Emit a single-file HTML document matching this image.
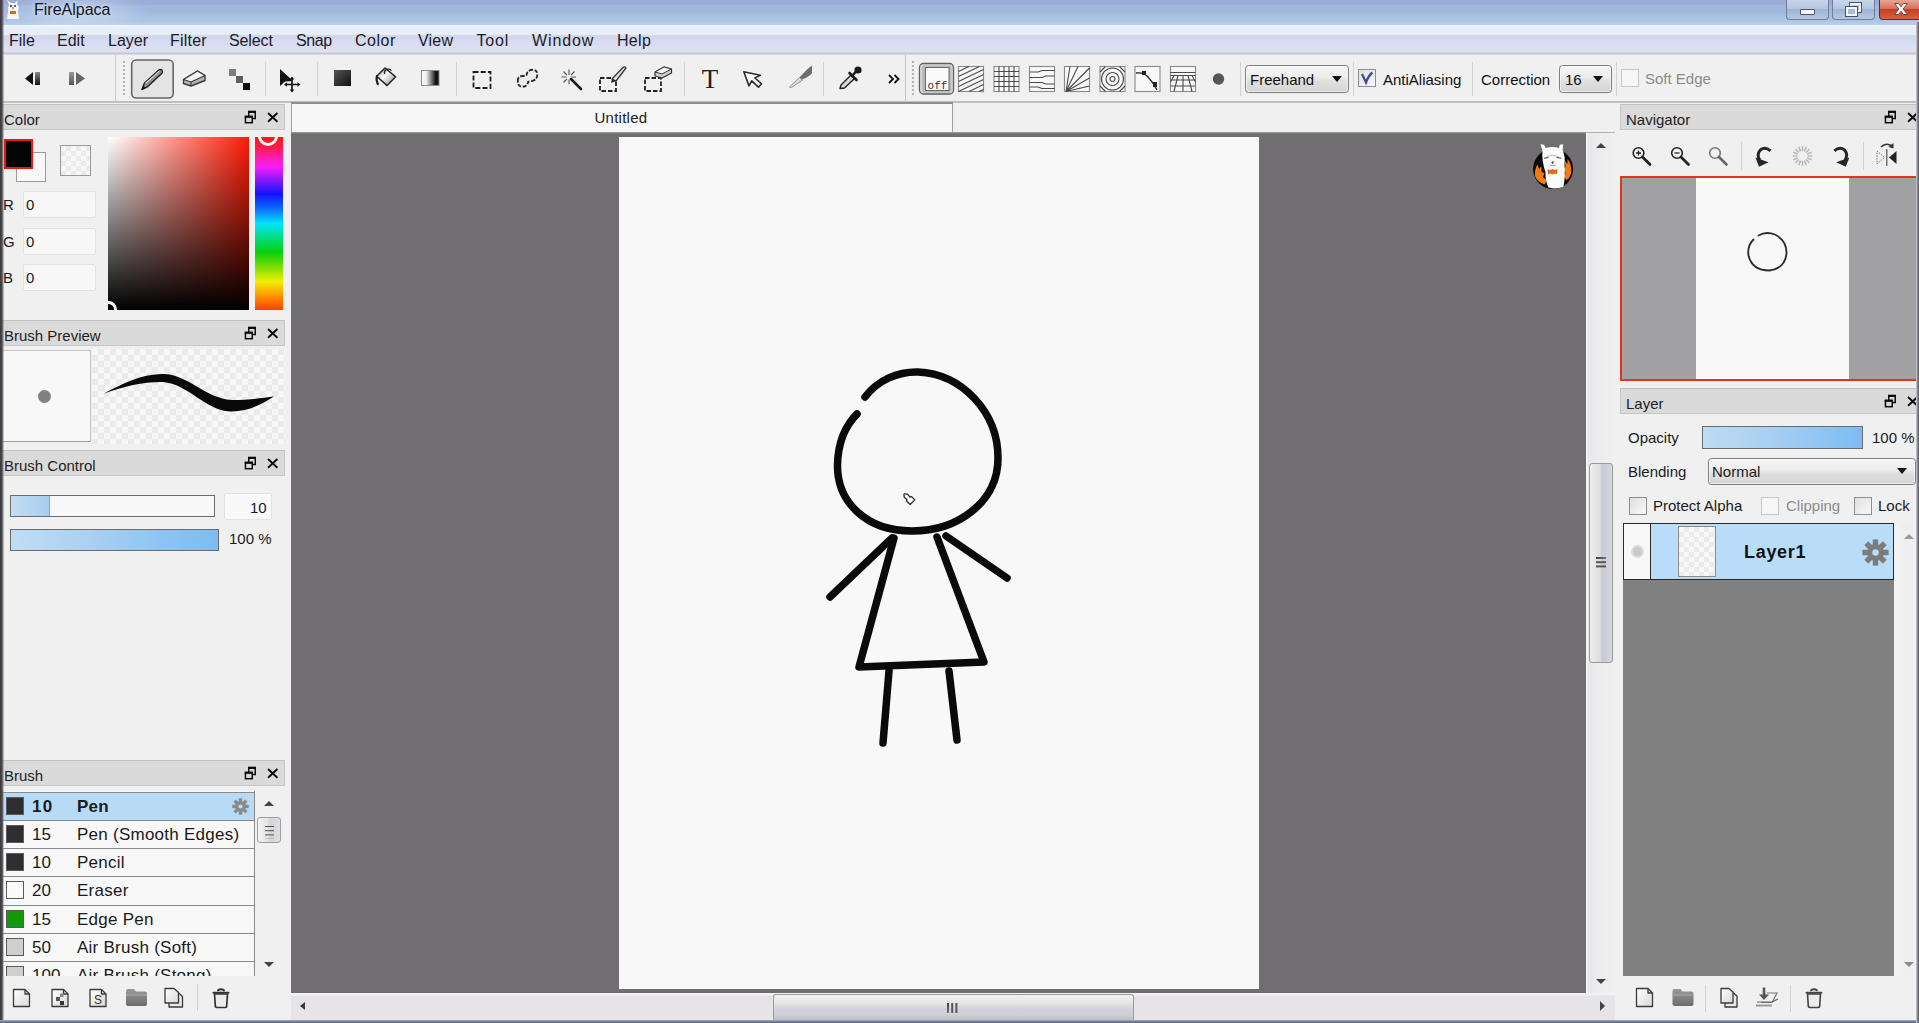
<!DOCTYPE html>
<html>
<head>
<meta charset="utf-8">
<title>FireAlpaca</title>
<style>
*{box-sizing:border-box;margin:0;padding:0}
html,body{width:1919px;height:1023px;overflow:hidden}
body{position:relative;background:#f0f0f0;font-family:"Liberation Sans",sans-serif;font-size:15px;color:#1a1a1a}
.a{position:absolute}
.t{position:absolute;white-space:nowrap;line-height:20px;font-size:15px}
#titlebar{left:0;top:0;width:1919px;height:25px;background:linear-gradient(180deg,#9badd6 0px,#9badd6 4px,#9fb8e0 6px,#9fb8e0 11px,#a4bddf 13px,#aec6e6 21px,#b9d0ee 25px)}
#menubar{left:0;top:25px;width:1919px;height:30px;background:linear-gradient(180deg,#f6f5fb 0px,#f3f3fa 1px,#e8eef8 2.5px,#e8eef8 9.5px,#d3d7ea 10.5px,#d4d8ec 14px,#d6daf4 16px,#dcdff2 22px,#dfe1f2 27px,#c4c6d6 28px,#c6c8d8 29px,#e8e8ee 30px)}
#toolbar{left:0;top:55px;width:1919px;height:48px;background:#f0f0f0;border-bottom:2px solid #bfbfbf}
.menu{top:31px;font-size:16px;color:#1c1c24}
.phead{height:26px;background:#dadada;border:1px solid #c6c6c6;border-top-color:#c2c2c2}
.phead .t{left:3px;top:5px;font-size:15px;color:#1e1e1e}
.sep{position:absolute;width:1px;background:#cdcdcd}
.checker{background-color:#f7f7f7;background-image:linear-gradient(45deg,#eaeaea 25%,transparent 25%,transparent 75%,#eaeaea 75%),linear-gradient(45deg,#eaeaea 25%,transparent 25%,transparent 75%,#eaeaea 75%);background-size:12px 12px;background-position:0 0,6px 6px}
.inp{background:#f7f7f7;border:1px solid #e3e3e3;border-radius:2px}
.cb{position:absolute;width:18px;height:18px;background:linear-gradient(135deg,#dedede,#fafafa);border:1px solid #8e8f8f}
.cb.dis{border-color:#c8c8c8;background:#f6f6f6}
.sel{position:absolute;border:1px solid #7e7e7e;border-radius:3.500px;background:linear-gradient(180deg,#f6f6f6 0%,#ededed 42%,#dfdfdf 58%,#d6d6d6 100%);box-shadow:inset 0 0 0 1px rgba(255,255,255,.55)}
.arrow{position:absolute;width:0;height:0;border-left:5px solid transparent;border-right:5px solid transparent;border-top:6px solid #111}
.sw2{position:absolute;left:3px;top:4px;width:18px;height:18px;border:1px solid #5a5a5a}
.n2{position:absolute;left:29px;top:4px;font-size:17px;line-height:20px}
.nm2{position:absolute;left:74px;top:4px;font-size:17px;line-height:20px;white-space:nowrap;letter-spacing:.25px}
</style>
</head>
<body>
<div id="titlebar" class="a"></div>
<div id="menubar" class="a"></div>
<div id="toolbar" class="a"></div>
<svg class="a" style="left:3px;top:0" width="22" height="20" viewBox="0 0 22 20">
<path d="M4 0 L6 5 Q4 8 5 12 L4 19 L16 19 L15 11 Q17 7 14 4 L15 0 L12 3 L8 3 Z" fill="#f7f5f0"/>
<rect x="7" y="11" width="6" height="3" fill="#d0622a"/>
<circle cx="8" cy="6" r="1" fill="#333"/><circle cx="12" cy="6" r="1" fill="#333"/>
<path d="M9 8 L11 8" stroke="#555" stroke-width="1"/>
</svg>
<div class="a" style="left:8px;top:-8px;width:140px;height:38px;background:radial-gradient(ellipse at center,rgba(255,255,255,.30) 0%,rgba(255,255,255,.18) 40%,rgba(255,255,255,0) 72%)"></div>
<div class="t" style="left:34px;top:0px;font-size:16px;line-height:20px;color:#16161e;text-shadow:0 0 5px rgba(255,255,255,.6)">FireAlpaca</div>
<div class="a" style="left:1786px;top:0;width:43px;height:20px;border:1px solid #6f7f9a;border-top:none;border-radius:0 0 4px 4px;background:linear-gradient(180deg,#c8d6ea 0%,#b4c6e0 45%,#9fb4d4 50%,#b6c8e2 100%)"></div>
<div class="a" style="left:1800px;top:8.500px;width:15px;height:6.500px;border:1px solid #4b5568;background:#f6f6f6;border-radius:1px"></div>
<div class="a" style="left:1832px;top:0;width:43px;height:20px;border:1px solid #6f7f9a;border-top:none;border-radius:0 0 4px 4px;background:linear-gradient(180deg,#c8d6ea 0%,#b4c6e0 45%,#9fb4d4 50%,#b6c8e2 100%)"></div>
<div class="a" style="left:1850px;top:3px;width:11px;height:9px;border:2px solid #f4f4f4;outline:1px solid #4b5568"></div>
<div class="a" style="left:1846px;top:7px;width:11px;height:9px;border:2px solid #f4f4f4;outline:1px solid #4b5568;background:#a9bcd8"></div>
<div class="a" style="left:1879px;top:0;width:41px;height:20px;border:1px solid #6a2a22;border-top:none;border-radius:0 0 0 4px;background:linear-gradient(180deg,#e8a594 0%,#d8705a 45%,#c43f24 50%,#d9623e 100%)"></div>
<svg class="a" style="left:1893px;top:3px" width="18" height="14" viewBox="0 0 18 14"><path d="M1.500 .500 L5.500 .500 L8 3.700 L10.500 .500 L14.500 .500 L10.100 6 L14.500 11.500 L10.500 11.500 L8 8.300 L5.500 11.500 L1.500 11.500 L5.900 6 Z" fill="#fbfbfb" stroke="#6a4a48" stroke-width="1" stroke-linejoin="round"/></svg>
<div class="t menu" style="left:9px;letter-spacing:0px">File</div>
<div class="t menu" style="left:57px;letter-spacing:0px">Edit</div>
<div class="t menu" style="left:108px;letter-spacing:0px">Layer</div>
<div class="t menu" style="left:170px;letter-spacing:0.2px">Filter</div>
<div class="t menu" style="left:229px;letter-spacing:-0.1px">Select</div>
<div class="t menu" style="left:296px;letter-spacing:-0.4px">Snap</div>
<div class="t menu" style="left:355px;letter-spacing:0.5px">Color</div>
<div class="t menu" style="left:418px;letter-spacing:0.2px">View</div>
<div class="t menu" style="left:476.5px;letter-spacing:0.8px">Tool</div>
<div class="t menu" style="left:532px;letter-spacing:0.9px">Window</div>
<div class="t menu" style="left:617px;letter-spacing:0.3px">Help</div>
<svg class="a" style="left:0;top:55px" width="1240" height="47" viewBox="0 55 1240 47">
<defs>
<linearGradient id="gv" x1="0" y1="0" x2="0" y2="1"><stop offset="0" stop-color="#888"/><stop offset="1" stop-color="#111"/></linearGradient>
<linearGradient id="gv2" x1="0" y1="0" x2="0" y2="1"><stop offset="0" stop-color="#999"/><stop offset="1" stop-color="#555"/></linearGradient>
<linearGradient id="gsq" x1="0" y1="0" x2="1" y2="1"><stop offset="0" stop-color="#555"/><stop offset="1" stop-color="#111"/></linearGradient>
<linearGradient id="ggr" x1="0" y1="0" x2="1" y2="0"><stop offset="0" stop-color="#fdfdfd"/><stop offset=".28" stop-color="#ededed"/><stop offset=".55" stop-color="#808080"/><stop offset=".8" stop-color="#141414"/><stop offset="1" stop-color="#101010"/></linearGradient>
<linearGradient id="bk" x1="0" y1="0" x2="1" y2="1"><stop offset="0" stop-color="#a8a8a8"/><stop offset=".45" stop-color="#f8f8f8"/><stop offset="1" stop-color="#7e7e7e"/></linearGradient>
</defs>
<!-- prev / next -->
<path d="M25 78.5 L33 72 L33 85 Z" fill="#111"/><rect x="35" y="72" width="5" height="13" fill="url(#gv)"/>
<rect x="69" y="72" width="5" height="13" fill="url(#gv2)"/><path d="M76 72 L85 78.5 L76 85 Z" fill="#666"/>
<!-- selected pencil box -->
<rect x="131.700" y="60" width="41.500" height="38" rx="4.500" fill="#e4e4e4" stroke="#666" stroke-width="1.600"/>
<path d="M142 89.500 L144.300 83.200 L158.800 70 Q160.500 68.800 162 70.300 Q163.300 71.800 162 73.300 L147.500 86.800 Z" fill="#8c8c8c" stroke="#1e1e1e" stroke-width="1.300" stroke-linejoin="round"/>
<path d="M145.500 83.500 L159.500 70.800" stroke="#d8d8d8" stroke-width="1.100"/>
<path d="M142 89.500 L143.300 86 L145 87.800 Z" fill="#111" stroke="#111" stroke-width=".8"/>
<!-- eraser -->
<path d="M183.500 79.500 L197.500 71 L205 75.500 L205 80.500 L191 86 L183.500 83.500 Z" fill="#b4b4b4" stroke="#3c3c3c" stroke-width="1.400" stroke-linejoin="round"/>
<path d="M183.500 79.500 L197.500 71 L205 75.500 L191 82 Z" fill="#f4f4f4" stroke="#3c3c3c" stroke-width="1.200" stroke-linejoin="round"/>
<path d="M191 82 L191 86" stroke="#3c3c3c" stroke-width="1.100"/>
<!-- dot tool -->
<rect x="229" y="69" width="7" height="7" fill="#7d7d7d"/><rect x="236" y="76" width="7" height="7" fill="#5f5f5f"/><rect x="243" y="83" width="7" height="7" fill="#0c0c0c"/>
<!-- move tool -->
<path d="M280 69 L280 86 L285 81.5 L293 81 Z" fill="#111"/>
<path d="M292 78 L292 91 M285.5 84.5 L299 84.5" stroke="#111" stroke-width="1.6"/>
<path d="M292 76.5 L294.3 79.5 L289.7 79.5Z M292 92.5 L294.3 89.5 L289.7 89.5Z M284 84.5 L287 82.2 L287 86.8Z M300.5 84.5 L297.5 82.2 L297.5 86.8Z" fill="#111"/>
<!-- fill rect -->
<rect x="334" y="70" width="17" height="16" fill="url(#gsq)"/>
<!-- bucket -->
<path d="M385 68 L395.700 76.800 L387.100 85.600 L376.700 76.200 Z" fill="url(#bk)" stroke="#262626" stroke-width="1.500" stroke-linejoin="round"/>
<path d="M384.600 74 Q383.800 70.300 387 69.300 Q390.300 68.500 391.300 70.800" fill="none" stroke="#262626" stroke-width="1.400"/>
<path d="M376.800 76.200 Q375.800 80 377.800 84" stroke="#1a1a1a" stroke-width="2.200" fill="none" stroke-linecap="round"/>
<!-- gradient -->
<rect x="421.500" y="70.500" width="17.500" height="15" fill="url(#ggr)" stroke="#8c8c8c" stroke-width="1"/>
<!-- select rect -->
<rect x="473.5" y="72" width="17" height="16" fill="none" stroke="#1d1d1d" stroke-width="1.8" stroke-dasharray="5 2.2"/>
<!-- lasso -->
<path d="M517.800 81 Q517.500 76.500 522 76 Q525 76 526.500 75 Q527 70.500 532 69.800 Q537.500 69.800 537.300 74.500 Q537.300 80 532 81 Q529 81.500 528 82 Q527.500 86.500 522.500 86.800 Q517.500 86.500 517.800 81 Z" fill="#ececec" stroke="#2a2a2a" stroke-width="1.900" stroke-dasharray="4 1.600"/>
<!-- wand -->
<path d="M571 79 L581 89" stroke="#1b1b1b" stroke-width="2.6" stroke-linecap="round"/>
<path d="M569 69.500 L569 75 M569 79.5 L569 84 M561.500 77 L566.500 77 M571.500 77 L576 77 M563.500 71.500 L567 75 M574.500 71.500 L571 75 M563.500 82.500 L567 79" stroke="#555" stroke-width="1.1"/>
<!-- select pen -->
<rect x="600" y="78" width="16" height="13" fill="none" stroke="#222" stroke-width="1.8" stroke-dasharray="4.5 2"/>
<path d="M612 79 L623 67.5 Q625 66 626 68 L616 81 Z" fill="#e6e6e6" stroke="#333" stroke-width="1.3" stroke-linejoin="round"/>
<path d="M612 79 L616 81 L611 83 Z" fill="#222"/>
<!-- select eraser -->
<rect x="645" y="78" width="16" height="13" fill="none" stroke="#222" stroke-width="1.8" stroke-dasharray="4.500 2"/>
<path d="M655 72 L664 67 L671.500 69 L671.500 73 L662 78 L655 76 Z" fill="#cfcfcf" stroke="#333" stroke-width="1.2" stroke-linejoin="round"/>
<path d="M655 72 L664 67 L671.500 69 L662 74 Z" fill="#f6f6f6" stroke="#333" stroke-width="1" stroke-linejoin="round"/>
<!-- T -->
<text x="710" y="88" font-family="Liberation Serif" font-size="27" text-anchor="middle" fill="#222">T</text>
<!-- arrow cursor -->
<path d="M746.500 69 L746.500 84 L750.800 80.200 L755 88.500 L759 86.300 L754.800 78.500 L760.800 78 Z" fill="#f7f7f7" stroke="#2c2c2c" stroke-width="1.600" stroke-linejoin="round" transform="rotate(-20 753 78)"/>
<!-- knife -->
<path d="M797 80 L806.500 70 Q810 66.500 812 65.500 L812 73 Q808.500 77.500 803 79 L799 82.500 Z" fill="#6e6e6e"/>
<path d="M789.500 87 L799.500 77.500 L802.500 80 L791.500 87.500 Z" fill="#dcdcdc" stroke="#8a8a8a" stroke-width=".9"/>
<!-- eyedropper -->
<path d="M840 88.500 L841 85 L851 75 L854.500 78.500 L844.500 88 Z" fill="#d9d9d9" stroke="#222" stroke-width="1.4" stroke-linejoin="round"/>
<path d="M849.500 73 L856.500 80 M852 76 L857 70.500" stroke="#1a1a1a" stroke-width="2.6" stroke-linecap="round"/>
<circle cx="858" cy="70" r="3.600" fill="#1a1a1a"/>
<!-- chevron -->
<path d="M889 75 L893 79 L889 83 M894.500 75 L898.500 79 L894.500 83" fill="none" stroke="#111" stroke-width="1.8"/>
<!-- snap off (selected) -->
<rect x="919.500" y="63.500" width="34" height="30.500" rx="4" fill="#dcdcdc" stroke="#5e5e5e" stroke-width="1.300"/>
<rect x="922" y="65.500" width="29.500" height="27" rx="2" fill="#b9b9b9"/>
<rect x="925.500" y="67.500" width="23.500" height="23" fill="#fafafa" stroke="#6a6a6a" stroke-width="1"/>
<text x="937.500" y="89" font-family="Liberation Mono" font-size="11" text-anchor="middle" fill="#333">off</text>
<!-- snap diag -->
<g stroke="#4a4a4a" stroke-width="1.100" fill="none">
<rect x="958.500" y="66.500" width="25" height="25" fill="#f8f8f8" stroke="#8a8a8a"/>
<path d="M958.500 71.500 L969 66.500 M958.500 76.500 L979.500 66.500 M958.500 81.500 L983.500 69.500 M958.500 86.500 L983.500 74.500 M958.500 91.500 L983.500 79.500 M969 91.500 L983.500 84.500 M979 91.500 L983.500 89.500"/>
<!-- grid -->
<rect x="994" y="66.500" width="25" height="25" fill="#f8f8f8" stroke="#8a8a8a"/>
<path d="M999 66.500 V91.500 M1004 66.500 V91.500 M1009 66.500 V91.500 M1014 66.500 V91.500 M994 71.500 H1019 M994 76.500 H1019 M994 81.500 H1019 M994 86.500 H1019"/>
<!-- horiz -->
<rect x="1029.500" y="66.500" width="25" height="25" fill="#f8f8f8" stroke="#8a8a8a"/>
<path d="M1029.500 72 H1038 L1042 70.500 H1054.500 M1029.500 77.500 H1042 L1046 76 H1054.500 M1029.500 82.500 H1042 L1046 84 H1054.500 M1029.500 87 H1038 L1042 88.500 H1054.500"/>
<!-- radial -->
<rect x="1064.500" y="66.500" width="25" height="25" fill="#f8f8f8" stroke="#8a8a8a"/>
<path d="M1066 91.500 L1070 66.500 M1066 91.500 L1078 66.500 M1066 91.500 L1089.500 68 M1066 91.500 L1089.500 78 M1066 91.500 L1089.500 86"/>
<!-- circles -->
<rect x="1100" y="66.500" width="25" height="25" fill="#f8f8f8" stroke="#8a8a8a"/>
<circle cx="1112.500" cy="79" r="2.500"/><circle cx="1112.500" cy="79" r="6.500"/><circle cx="1112.500" cy="79" r="11"/>
<path d="M1100 72 L1105.500 66.500 M1119.500 66.500 L1125 72 M1100 86 L1105.500 91.500 M1119.500 91.500 L1125 86"/>
<!-- curve -->
<rect x="1135" y="66.500" width="25" height="25" fill="#f8f8f8" stroke="#8a8a8a"/>
<path d="M1136 73 Q1144 72 1148 77 Q1153 82 1157 90" stroke="#222" stroke-width="1.300"/>
<!-- persp -->
<rect x="1170.500" y="66.500" width="25" height="25" fill="#f8f8f8" stroke="#8a8a8a"/>
<path d="M1170.500 72.500 H1195.500 M1170.500 75.500 H1195.500 M1170.500 80 H1195.500 M1170.500 86 H1195.500 M1178 75.500 L1174 91.500 M1183 75.500 L1183 91.500 M1188 75.500 L1192 91.500 M1174 75.500 L1170.500 82 M1192 75.500 L1195.500 82"/>
</g>
<rect x="1142" y="71" width="4" height="4" fill="#222"/><rect x="1153" y="82" width="4" height="5" fill="#222"/>
<circle cx="1218.500" cy="79" r="5.700" fill="#555"/>
</svg>
<div class="sep" style="left:265px;top:62px;height:34px;background:#d2d2d2"></div>
<div class="sep" style="left:317px;top:62px;height:34px;background:#d2d2d2"></div>
<div class="sep" style="left:456px;top:62px;height:34px;background:#d2d2d2"></div>
<div class="sep" style="left:684px;top:62px;height:34px;background:#d2d2d2"></div>
<div class="sep" style="left:823px;top:62px;height:34px;background:#d2d2d2"></div>
<div class="sep" style="left:1240px;top:62px;height:34px;background:#d2d2d2"></div>
<div class="sep" style="left:1353px;top:62px;height:34px;background:#d2d2d2"></div>
<div class="sep" style="left:1472px;top:62px;height:34px;background:#d2d2d2"></div>
<div class="sep" style="left:1616px;top:62px;height:34px;background:#d2d2d2"></div>
<div class="sep" style="left:115px;top:55px;height:46px;background:#c9c9c9"></div>
<div class="a" style="left:123px;top:61px;width:2px;height:2px;background:#b4b4b4;box-shadow:0 4px 0 #b4b4b4,0 8px 0 #b4b4b4,0 12px 0 #b4b4b4,0 16px 0 #b4b4b4,0 20px 0 #b4b4b4,0 24px 0 #b4b4b4,0 28px 0 #b4b4b4,0 32px 0 #b4b4b4"></div>
<div class="sep" style="left:905px;top:55px;height:46px;background:#c4c4c4"></div>
<div class="a" style="left:912px;top:61px;width:2px;height:2px;background:#b4b4b4;box-shadow:0 4px 0 #b4b4b4,0 8px 0 #b4b4b4,0 12px 0 #b4b4b4,0 16px 0 #b4b4b4,0 20px 0 #b4b4b4,0 24px 0 #b4b4b4,0 28px 0 #b4b4b4,0 32px 0 #b4b4b4"></div>
<div class="sel" style="left:1245px;top:65px;width:104px;height:28px"></div>
<div class="t" style="left:1250px;top:70px;color:#111">Freehand</div>
<div class="arrow" style="left:1331.500px;top:76px"></div>
<div class="cb" style="left:1358px;top:69px"></div>
<svg class="a" style="left:1358px;top:69px" width="18" height="18" viewBox="0 0 18 18"><path d="M4 5 L8 13.500 Q10.500 6.500 14.500 3.500" fill="none" stroke="#3e4c9c" stroke-width="2.300"/></svg>
<div class="t" style="left:1383px;top:69.500px;color:#111">AntiAliasing</div>
<div class="t" style="left:1481px;top:70px;color:#111">Correction</div>
<div class="sel" style="left:1559px;top:65px;width:53px;height:28px"></div>
<div class="t" style="left:1565px;top:70px;color:#111">16</div>
<div class="arrow" style="left:1593px;top:76px"></div>
<div class="cb dis" style="left:1621px;top:69px"></div>
<div class="t" style="left:1645px;top:69px;color:#8a8a8a">Soft Edge</div>
<div class="a phead" style="left:0px;top:104px;width:285px"><div class="t" style="left:3px">Color</div></div>
<svg class="a" style="left:243px;top:104px" width="40" height="26" viewBox="0 0 40 26"><g fill="#dadada" stroke="#0c0c0c" stroke-width="1.5"><rect x="5.750" y="8.200" width="6.500" height="6.300"/><path d="M5 7.800 H13" stroke-width="2.200"/><rect x="2.450" y="12.900" width="6.800" height="5.800"/><path d="M1.700 12.600 H10" stroke-width="2.200"/></g><path d="M25 9 L34.400 17.800 M34.400 9 L25 17.800" stroke="#0c0c0c" stroke-width="1.900"/></svg>
<div class="a" style="left:16px;top:152px;width:30px;height:30px;background:#f8f8f8;border:1px solid #9a9a9a"></div>
<div class="a" style="left:4px;top:139px;width:29px;height:30px;background:#050505;border:2px solid #e51b10"></div>
<div class="a checker" style="left:60px;top:145px;width:31px;height:31px;border:1px solid #9a9a9a;background-size:10px 10px;background-position:0 0,5px 5px"></div>
<div class="t" style="left:3px;top:195px">R</div>
<div class="a inp" style="left:23px;top:191px;width:73px;height:27px"></div>
<div class="t" style="left:26px;top:195px">0</div>
<div class="t" style="left:3px;top:232px">G</div>
<div class="a inp" style="left:23px;top:228px;width:73px;height:27px"></div>
<div class="t" style="left:26px;top:232px">0</div>
<div class="t" style="left:3px;top:268px">B</div>
<div class="a inp" style="left:23px;top:264px;width:73px;height:27px"></div>
<div class="t" style="left:26px;top:268px">0</div>
<div class="a" style="left:108px;top:137px;width:141px;height:173px;background:linear-gradient(180deg,rgba(0,0,0,0) 0%,#000 100%),linear-gradient(90deg,#fff 0%,#ff1a05 100%)"></div>
<div class="a" style="left:255px;top:137px;width:28px;height:173px;background:linear-gradient(180deg,#ff1616 0%,#ff1a3c 5%,#fb1ec0 13%,#f41cf8 17.5%,#8418fa 25%,#1212fb 33%,#0c74fb 42%,#02e4fb 50%,#02dc84 58%,#06d00c 66.5%,#7ade04 75%,#eef004 83.5%,#ff9c00 91%,#ff4000 100%)"></div>
<div class="a" style="left:258px;top:126px;width:20px;height:20px;border:3px solid #fff;border-radius:50%;clip-path:inset(11px 0 0 0)"></div>
<div class="a" style="left:100px;top:301px;width:17px;height:17px;border:3px solid #fff;border-radius:50%;clip-path:inset(0 0 8px 8px)"></div>
<div class="a phead" style="left:0px;top:320px;width:285px"><div class="t" style="left:3px">Brush Preview</div></div>
<svg class="a" style="left:243px;top:320px" width="40" height="26" viewBox="0 0 40 26"><g fill="#dadada" stroke="#0c0c0c" stroke-width="1.5"><rect x="5.750" y="8.200" width="6.500" height="6.300"/><path d="M5 7.800 H13" stroke-width="2.200"/><rect x="2.450" y="12.900" width="6.800" height="5.800"/><path d="M1.700 12.600 H10" stroke-width="2.200"/></g><path d="M25 9 L34.400 17.800 M34.400 9 L25 17.800" stroke="#0c0c0c" stroke-width="1.900"/></svg>
<div class="a checker" style="left:92px;top:349px;width:193px;height:95px"></div>
<div class="a" style="left:0px;top:350px;width:91px;height:92px;background:#f8f8f8;border:1px solid #c4c4c4;border-bottom-color:#9a9a9a"></div>
<div class="a" style="left:38px;top:390px;width:13px;height:13px;border-radius:50%;background:#808080"></div>
<svg class="a" style="left:91px;top:348px" width="194" height="95" viewBox="91 348 194 95"><path d="M104 393.500 C 125 382, 145 373, 165 374 C 190 376, 205 398, 232 400 C 250 400, 262 398, 274 396.500 C 262 404, 248 412, 230 411.500 C 205 410, 188 384, 163 382 C 145 381.500, 125 386, 104 393.500 Z" fill="#0a0a0a"/></svg>
<div class="a phead" style="left:0px;top:450px;width:285px"><div class="t" style="left:3px">Brush Control</div></div>
<svg class="a" style="left:243px;top:450px" width="40" height="26" viewBox="0 0 40 26"><g fill="#dadada" stroke="#0c0c0c" stroke-width="1.5"><rect x="5.750" y="8.200" width="6.500" height="6.300"/><path d="M5 7.800 H13" stroke-width="2.200"/><rect x="2.450" y="12.900" width="6.800" height="5.800"/><path d="M1.700 12.600 H10" stroke-width="2.200"/></g><path d="M25 9 L34.400 17.800 M34.400 9 L25 17.800" stroke="#0c0c0c" stroke-width="1.900"/></svg>
<div class="a" style="left:10px;top:495px;width:205px;height:22px;background:#f8f8f8;border:1px solid #6c6c6c"></div>
<div class="a" style="left:11px;top:496px;width:39px;height:20px;background:linear-gradient(90deg,#c3ddf3,#a9cdf0);border-right:1px solid #6aa8e6"></div>
<div class="a inp" style="left:224px;top:493px;width:48px;height:27px;background:#f9f9f9"></div>
<div class="t" style="left:250px;top:498px">10</div>
<div class="a" style="left:10px;top:529px;width:209px;height:22px;background:linear-gradient(90deg,#c0ddf4 0%,#a9cff2 40%,#8fc5f4 70%,#7cbcf3 100%);border:1px solid #6c6c6c"></div>
<div class="t" style="left:229px;top:529px">100 %</div>
<div class="a phead" style="left:0px;top:760px;width:285px"><div class="t" style="left:3px">Brush</div></div>
<svg class="a" style="left:243px;top:760px" width="40" height="26" viewBox="0 0 40 26"><g fill="#dadada" stroke="#0c0c0c" stroke-width="1.5"><rect x="5.750" y="8.200" width="6.500" height="6.300"/><path d="M5 7.800 H13" stroke-width="2.200"/><rect x="2.450" y="12.900" width="6.800" height="5.800"/><path d="M1.700 12.600 H10" stroke-width="2.200"/></g><path d="M25 9 L34.400 17.800 M34.400 9 L25 17.800" stroke="#0c0c0c" stroke-width="1.900"/></svg>
<div class="a" style="left:2px;top:791px;width:253px;height:185px;overflow:hidden;background:#f8f8f8;border-left:1px solid #8a8a8a;border-right:1px solid #8a8a8a">
<div class="a" style="left:0;top:1px;width:251px;height:28px;border-top:1px solid #8a8a8a;background:#b7dbf7;font-weight:bold;"><div class="sw2" style="background:#2e2e30"></div><div class="n2" style="letter-spacing:1.200px;">10</div><div class="nm2">Pen</div></div>
<div class="a" style="left:0;top:29px;width:251px;height:28px;border-top:1px solid #8a8a8a;"><div class="sw2" style="background:#2e2e30"></div><div class="n2" style="">15</div><div class="nm2">Pen (Smooth Edges)</div></div>
<div class="a" style="left:0;top:57px;width:251px;height:28px;border-top:1px solid #8a8a8a;"><div class="sw2" style="background:#2e2e30"></div><div class="n2" style="">10</div><div class="nm2">Pencil</div></div>
<div class="a" style="left:0;top:85px;width:251px;height:29px;border-top:1px solid #8a8a8a;"><div class="sw2" style="background:#fafafa"></div><div class="n2" style="">20</div><div class="nm2">Eraser</div></div>
<div class="a" style="left:0;top:114px;width:251px;height:28px;border-top:1px solid #8a8a8a;"><div class="sw2" style="background:#10990a"></div><div class="n2" style="">15</div><div class="nm2">Edge Pen</div></div>
<div class="a" style="left:0;top:142px;width:251px;height:28px;border-top:1px solid #8a8a8a;"><div class="sw2" style="background:#cfcfcf"></div><div class="n2" style="">50</div><div class="nm2">Air Brush (Soft)</div></div>
<div class="a" style="left:0;top:170px;width:251px;height:29px;border-top:1px solid #8a8a8a;"><div class="sw2" style="background:#cfcfcf"></div><div class="n2" style="">100</div><div class="nm2">Air Brush (Stong)</div></div>
</div>
<svg class="a" style="left:232px;top:798px" width="17" height="17" viewBox="-10 -10 20 20"><g fill="#8a8a8a"><circle r="6.200"/><rect x="-2" y="-9.700" width="4" height="5" transform="rotate(0)"/><rect x="-2" y="-9.700" width="4" height="5" transform="rotate(45)"/><rect x="-2" y="-9.700" width="4" height="5" transform="rotate(90)"/><rect x="-2" y="-9.700" width="4" height="5" transform="rotate(135)"/><rect x="-2" y="-9.700" width="4" height="5" transform="rotate(180)"/><rect x="-2" y="-9.700" width="4" height="5" transform="rotate(225)"/><rect x="-2" y="-9.700" width="4" height="5" transform="rotate(270)"/><rect x="-2" y="-9.700" width="4" height="5" transform="rotate(315)"/></g><circle r="2.400" fill="#b7dbf7"/></svg>
<div class="a" style="left:257px;top:792px;width:25px;height:184px;background:#f0f0f0"></div>
<div class="a" style="left:257px;top:817px;width:24px;height:26px;border:1px solid #9e9e9e;border-radius:3px;background:linear-gradient(90deg,#f3f3f3 0%,#e4e4e6 45%,#d4d4d9 55%,#dfdfe3 100%)"></div>
<div class="a" style="left:264.500px;top:825.500px;width:9px;height:1.500px;background:#505050;box-shadow:0 4.200px 0 #505050,0 8.400px 0 #505050,0 12px 0 rgba(120,120,120,.35)"></div>
<div class="a" style="left:264px;top:801px;width:0;height:0;border-left:5px solid transparent;border-right:5px solid transparent;border-bottom:5px solid #444"></div>
<div class="a" style="left:264px;top:962px;width:0;height:0;border-left:5px solid transparent;border-right:5px solid transparent;border-top:5px solid #444"></div>
<svg class="a" style="left:0;top:984px" width="285" height="28" viewBox="0 984 285 28">
<defs><linearGradient id="pg" x1="0" y1="0" x2="1" y2="1"><stop offset="0" stop-color="#fff"/><stop offset="1" stop-color="#d8d8d8"/></linearGradient>
<linearGradient id="fg" x1="0" y1="0" x2="0" y2="1"><stop offset="0" stop-color="#9a9a9a"/><stop offset="1" stop-color="#6c6c6c"/></linearGradient></defs>
<g stroke="#3a3a3a" stroke-width="1.300" fill="url(#pg)" stroke-linejoin="round">
<path d="M13.500 989.500 H25 L29.500 994 V1006.500 H13.500 Z"/><path d="M25 989.500 V994 H29.500" fill="none"/>
<path d="M52 989.500 H63.500 L68 994 V1006.500 H52 Z"/><path d="M63.500 989.500 V994 H68" fill="none"/>
<path d="M90 989.500 H101.500 L106 994 V1006.500 H90 Z"/><path d="M101.500 989.500 V994 H106" fill="none"/>
<path d="M169 992.500 H178 L182.500 996.500 V1007 H169 Z" fill="#e8e8e8"/>
<path d="M165 988.500 H174 L178.500 992.500 V1003 H165 Z"/>
</g>
<rect x="56" y="997" width="4" height="4" fill="#555"/><rect x="60" y="993.500" width="3.500" height="3.500" fill="#888"/><rect x="60" y="1001" width="4" height="4" fill="#333"/>
<text x="98" y="1004" font-family="Liberation Sans" font-size="12" text-anchor="middle" fill="#333">S</text>
<path d="M126 991 Q126 989 128 989 H134 L136 991.500 H145 Q147 991.500 147 993.500 V1004 Q147 1006 145 1006 H128 Q126 1006 126 1004 Z" fill="url(#fg)"/>
<path d="M126 995 H147" stroke="#aaa" stroke-width="1"/>
<path d="M214.500 994 H227.500 L226.700 1006 Q226.700 1007.500 224.700 1007.500 H217.300 Q215.300 1007.500 215.300 1006 Z" fill="#ececec" stroke="#333" stroke-width="1.700" stroke-linejoin="round"/>
<path d="M213.500 992.800 H228.500 M218 990.300 Q221 988.300 224 990.300" stroke="#333" stroke-width="2" fill="none" stroke-linecap="round"/>
</svg>
<div class="sep" style="left:197px;top:984px;height:27px;background:#d2d2d2"></div>
<div class="a" style="left:291px;top:102px;width:662px;height:31px;background:#f7f7f7;border:1px solid #a0a0a0;border-top:2px solid #8e8e8e;border-bottom:none"></div>
<div class="t" style="left:594.500px;top:108px;color:#222;letter-spacing:.25px">Untitled</div>
<div class="a" style="left:291px;top:131.500px;width:1295px;height:861.500px;background:#706e71;border-top:1px solid #959597"></div>
<div class="a" style="left:291px;top:132.500px;width:1295px;height:1px;background:#7a797c"></div>
<div class="a" style="left:619px;top:137px;width:640px;height:852px;background:#f8f8f8"></div>
<svg class="a" style="left:619px;top:137px" width="640" height="852" viewBox="619 137 640 852" fill="none" stroke="#0a0a0a" stroke-width="7.5" stroke-linecap="round" stroke-linejoin="round">
<path d="M865 397 C 878 380, 898 371.5, 918 372 C 962 374, 998 412, 998 458 C 998 502, 958 531, 912 531 C 866 531, 837 502, 837.5 465 C 838 442, 845 426, 857 414"/>
<path d="M894 538 L 859 667 L 984 662 L 937 537"/>
<path d="M892 538 L 830 597"/>
<path d="M946 536 L 1007 578"/>
<path d="M889 671 L 883 743"/>
<path d="M949 671 L 957 740"/>
</svg>
<svg class="a" style="left:900px;top:490px" width="18" height="18" viewBox="900 490 18 18"><path d="M904 494.800 Q903.800 493.800 905 493.900 L907.400 494.100 L910 497 L911.600 496.600 L914.800 499.900 L910.200 504.500 L906.600 501.200 L907 499.600 L904.200 497.200 Z" fill="#fdfdfd" stroke="#2a2a2a" stroke-width="1.300" stroke-linejoin="round"/></svg>
<svg class="a" style="left:1530px;top:142px" width="46" height="50" viewBox="0 0 46 50">
<circle cx="23.100" cy="27" r="20" fill="#0c0806"/>
<path d="M5 34 Q4.500 27 7.500 22.500 L9 27 L11.500 24.500 L11.500 30 L14.500 31 L13 35 L16.500 38 L15 42.500 Q7.500 40.500 5 34 Z" fill="#f47a10"/>
<path d="M41.300 30 Q41.500 22 37.500 17 L37.500 22 L35 19 L35.500 25 L33.500 27 L35.500 31 L34 35 L36.500 38 Q40.500 35 41.300 30 Z" fill="#f47a10"/>
<path d="M10.500 2.300 L14.200 2.800 L15.500 6 Q23 4.200 29 6 L29.800 2.800 L33.200 2.300 L32.700 8.500 Q35.500 14 34.500 23 Q35.500 35 33.400 44.800 Q26 48 18.500 45.500 Q15 38 15.500 30 Q11.500 19 12.500 9 Z" fill="#fbfbf9"/>
<path d="M14 16.200 L18.500 15.500 M26.500 15.500 L31.500 16.200" stroke="#444" stroke-width="1.100"/>
<path d="M16.500 14.500 Q22.500 12 28.500 14.500" stroke="#aaa" stroke-width=".8" fill="none"/>
<path d="M21 20.200 L24 19 L23 22 Z" fill="#333"/>
<path d="M20 23.300 H25.500" stroke="#777" stroke-width=".8"/>
<path d="M17.500 27 L20 28 L22.500 27 L25 28 L27.500 27 L27 32.500 L24.800 31.600 L22.500 32.500 L20.200 31.600 L18 32.500 Z" fill="#d86e1c"/>
</svg>

<div class="a" style="left:1586px;top:132px;width:29px;height:861px;background:linear-gradient(90deg,#fafafa 0,#f4f4f5 1px,#e9e8ea 2.500px,#ecebed 40%,#f1f0f1 100%);border-top:1px solid #b0b0b0"></div>
<div class="a" style="left:1589px;top:463px;width:24px;height:200px;border:1px solid #9a9a9a;border-radius:3px;background:linear-gradient(90deg,#eeeeee 0%,#dddde0 45%,#c9c9d2 55%,#d6d6de 100%)"></div>
<div class="a" style="left:1596px;top:557.300px;width:10px;height:1.600px;background:linear-gradient(90deg,#3c3c3c,#777);box-shadow:0 4.200px 0 #585858,0 8.400px 0 #585858"></div>
<div class="a" style="left:1596px;top:143px;width:0;height:0;border-left:5px solid transparent;border-right:5px solid transparent;border-bottom:5px solid #444"></div>
<div class="a" style="left:1596px;top:979px;width:0;height:0;border-left:5px solid transparent;border-right:5px solid transparent;border-top:5px solid #444"></div>
<div class="a" style="left:291px;top:993px;width:1324px;height:28px;background:linear-gradient(180deg,#f4f4f5 0,#f0eff1 2px,#e6e4e6 3px,#e6e4e6 100%)"></div>
<div class="a" style="left:773px;top:994px;width:361px;height:26.500px;border:1px solid #9a9a9a;border-bottom-color:#b4b4ba;border-radius:3px 3px 2px 2px;background:linear-gradient(180deg,#f2f2f2 0%,#e7e7e9 30%,#d3d3db 55%,#cfcfd7 80%,#bebec6 100%)"></div>
<div class="a" style="left:947.300px;top:1003px;width:1.600px;height:10px;background:linear-gradient(180deg,#3c3c3c,#777);box-shadow:4.200px 0 0 #585858,8.400px 0 0 #585858"></div>
<div class="a" style="left:300px;top:1001.500px;width:0;height:0;border-top:4.500px solid transparent;border-bottom:4.500px solid transparent;border-right:5.500px solid #3a3a3a"></div>
<div class="a" style="left:1600px;top:1001px;width:0;height:0;border-top:5px solid transparent;border-bottom:5px solid transparent;border-left:5px solid #444"></div>
<div class="a phead" style="left:1620px;top:104px;width:301px"><div class="t" style="left:5px">Navigator</div></div>
<svg class="a" style="left:1883px;top:104px" width="40" height="26" viewBox="0 0 40 26"><g fill="#dadada" stroke="#0c0c0c" stroke-width="1.5"><rect x="5.750" y="8.200" width="6.500" height="6.300"/><path d="M5 7.800 H13" stroke-width="2.200"/><rect x="2.450" y="12.900" width="6.800" height="5.800"/><path d="M1.700 12.600 H10" stroke-width="2.200"/></g><path d="M25 9 L34.400 17.800 M34.400 9 L25 17.800" stroke="#0c0c0c" stroke-width="1.900"/></svg>
<svg class="a" style="left:1621px;top:140px" width="298" height="34" viewBox="1621 140 298 34">
<g fill="none" stroke="#222" stroke-width="1.600">
<circle cx="1638.500" cy="153" r="5.300" fill="#f4f4f4"/><path d="M1642.500 157 L1650 164.500" stroke-width="2.800" stroke-linecap="round"/><path d="M1636 153 H1641 M1638.500 150.500 V155.500" stroke-width="1.300"/>
<circle cx="1677" cy="153" r="5.300" fill="#f4f4f4"/><path d="M1681 157 L1688.500 164.500" stroke-width="2.800" stroke-linecap="round"/><path d="M1674.500 153 H1679.500" stroke-width="1.300"/>
<circle cx="1715" cy="153" r="5.300" fill="#f4f4f4" stroke="#777"/><path d="M1719 157 L1726.500 164.500" stroke-width="2.600" stroke-linecap="round" stroke="#666"/>
</g>
<!-- rotate left -->
<path d="M1770.500 150.800 Q1765 146.300 1760.300 150 Q1756.300 154.500 1759.800 160" fill="none" stroke="#262626" stroke-width="2.900"/>
<path d="M1755.500 157.500 L1768.500 162.300 L1759 166.800 Z" fill="#262626"/>
<!-- reset (starburst) -->
<g stroke="#b9b9b9" stroke-width="1.600" transform="translate(1802.500 156)">
<path d="M0 -10 V-5 M0 10 V5 M-10 0 H-5 M10 0 H5 M-7 -7 L-3.500 -3.500 M7 7 L3.500 3.500 M-7 7 L-3.500 3.500 M7 -7 L3.500 -3.500 M-3.800 -9.200 L-1.900 -4.600 M3.800 -9.200 L1.900 -4.600 M-3.800 9.200 L-1.900 4.600 M3.800 9.200 L1.900 4.600 M-9.200 -3.800 L-4.600 -1.900 M9.200 -3.800 L4.600 -1.900 M-9.200 3.800 L-4.600 1.900 M9.200 3.800 L4.600 1.900"/></g>
<!-- rotate right -->
<path d="M1834.300 150.800 Q1839.800 146.300 1844.500 150 Q1848.500 154.500 1845 160" fill="none" stroke="#262626" stroke-width="2.900"/>
<path d="M1849.300 157.500 L1836.300 162.300 L1845.800 166.800 Z" fill="#262626"/>
<!-- flip -->
<path d="M1877 151 L1884.500 157.500 L1877 164 Z" fill="none" stroke="#777" stroke-width="1" stroke-dasharray="1.500 1.200"/>
<path d="M1896.500 151 L1889 157.500 L1896.500 164 Z" fill="#222"/>
<path d="M1886.800 149 V166" stroke="#555" stroke-width="1.200"/>
<path d="M1881 147 Q1886 142 1892 146" fill="none" stroke="#333" stroke-width="1.600"/><path d="M1893.500 143 L1893.500 148.500 L1888.500 147 Z" fill="#333"/>
</svg>
<div class="sep" style="left:1741px;top:142px;height:28px;background:#d2d2d2"></div>
<div class="sep" style="left:1863px;top:142px;height:28px;background:#d2d2d2"></div>
<div class="a" style="left:1620px;top:176px;width:302px;height:205px;border:2px solid #e2351f;background:linear-gradient(90deg,#a1a1a3 0,#a1a1a3 74px,#f8f8f8 74px,#f8f8f8 227px,#a1a1a3 227px)"></div>
<svg class="a" style="left:1740px;top:225px" width="56" height="56" viewBox="1740 225 56 56"><path d="M1758.500 235.500 Q1766 231 1775 234.500 Q1787 241 1786.500 253.500 Q1785 268.500 1769.500 270.500 Q1752 270.500 1748.500 255.500 Q1747 246 1753.500 239.500" fill="none" stroke="#2c2c2c" stroke-width="1.850" stroke-linecap="round"/></svg>
<div class="a phead" style="left:1620px;top:388px;width:301px"><div class="t" style="left:5px">Layer</div></div>
<svg class="a" style="left:1883px;top:388px" width="40" height="26" viewBox="0 0 40 26"><g fill="#dadada" stroke="#0c0c0c" stroke-width="1.5"><rect x="5.750" y="8.200" width="6.500" height="6.300"/><path d="M5 7.800 H13" stroke-width="2.200"/><rect x="2.450" y="12.900" width="6.800" height="5.800"/><path d="M1.700 12.600 H10" stroke-width="2.200"/></g><path d="M25 9 L34.400 17.800 M34.400 9 L25 17.800" stroke="#0c0c0c" stroke-width="1.900"/></svg>
<div class="t" style="left:1628px;top:428px">Opacity</div>
<div class="a" style="left:1702px;top:426px;width:161px;height:23px;background:linear-gradient(90deg,#bcdbf4 0%,#aad1f2 40%,#8fc5f4 75%,#7cbcf3 100%);border:1px solid #6c6c6c"></div>
<div class="t" style="left:1872px;top:428px">100 %</div>
<div class="t" style="left:1628px;top:462px">Blending</div>
<div class="sel" style="left:1708px;top:458px;width:208px;height:27px"></div>
<div class="t" style="left:1712px;top:462px">Normal</div>
<div class="arrow" style="left:1897px;top:468px"></div>
<div class="cb" style="left:1629px;top:497px"></div>
<div class="t" style="left:1653px;top:496px">Protect Alpha</div>
<div class="cb dis" style="left:1761px;top:497px"></div>
<div class="t" style="left:1786px;top:496px;color:#8a8a8a">Clipping</div>
<div class="cb" style="left:1854px;top:497px"></div>
<div class="t" style="left:1878px;top:496px">Lock</div>
<div class="a" style="left:1623px;top:523px;width:271px;height:453px;background:#808080"></div>
<div class="a" style="left:1623px;top:523px;width:271px;height:57px;background:#b9dcf8;border:1px solid #2a2a2a"></div>
<div class="a" style="left:1624px;top:524px;width:27px;height:55px;background:#f8f8f8;border-right:1px solid #2a2a2a"></div>
<div class="a" style="left:1631px;top:545px;width:13px;height:13px;border-radius:50%;background:#c9c9c9;border:2px solid #dcdcdc"></div>
<div class="a checker" style="left:1678px;top:526px;width:38px;height:51px;border:1px solid #8e8e8e;background-size:10px 10px;background-position:0 0,5px 5px"></div>
<div class="t" style="left:1744px;top:542px;font-size:18px;letter-spacing:.7px;font-weight:bold;color:#111">Layer1</div>
<svg class="a" style="left:1862px;top:539px" width="27" height="27" viewBox="-10 -10 20 20"><g fill="#7c7c7c"><circle r="6.200"/><rect x="-2" y="-9.700" width="4" height="5" transform="rotate(0)"/><rect x="-2" y="-9.700" width="4" height="5" transform="rotate(45)"/><rect x="-2" y="-9.700" width="4" height="5" transform="rotate(90)"/><rect x="-2" y="-9.700" width="4" height="5" transform="rotate(135)"/><rect x="-2" y="-9.700" width="4" height="5" transform="rotate(180)"/><rect x="-2" y="-9.700" width="4" height="5" transform="rotate(225)"/><rect x="-2" y="-9.700" width="4" height="5" transform="rotate(270)"/><rect x="-2" y="-9.700" width="4" height="5" transform="rotate(315)"/></g><circle r="2.400" fill="#b9dcf8"/></svg>
<div class="a" style="left:1894px;top:523px;width:25px;height:453px;background:linear-gradient(90deg,#f3f3f3,#eeeeee 50%,#f2f2f2)"></div>
<div class="a" style="left:1904px;top:534px;width:0;height:0;border-left:5px solid transparent;border-right:5px solid transparent;border-bottom:5px solid #9a9a9a"></div>
<div class="a" style="left:1904px;top:962px;width:0;height:0;border-left:5px solid transparent;border-right:5px solid transparent;border-top:5px solid #8c8c8c"></div>
<svg class="a" style="left:1621px;top:984px" width="298" height="28" viewBox="1621 984 298 28">
<g stroke="#3a3a3a" stroke-width="1.300" fill="url(#pg)" stroke-linejoin="round">
<path d="M1636.500 988.500 H1648 L1652.500 993 V1006.500 H1636.500 Z"/><path d="M1648 988.500 V993 H1652.500" fill="none"/>
<path d="M1725 992.500 H1733 L1737 996 V1007 H1725 Z" fill="#e8e8e8"/>
<path d="M1721 988.500 H1729 L1733 992 V1003 H1721 Z"/>
</g>
<path d="M1672.500 991 Q1672.500 989 1674.500 989 H1680.500 L1682.500 991.500 H1691.500 Q1693.500 991.500 1693.500 993.500 V1004 Q1693.500 1006 1691.500 1006 H1674.500 Q1672.500 1006 1672.500 1004 Z" fill="url(#fg)"/>
<path d="M1672.500 995 H1693.500" stroke="#aaa" stroke-width="1"/>
<!-- merge down -->
<path d="M1764 987.500 V996" stroke="#555" stroke-width="2.600"/><path d="M1759 994.500 H1769 L1764 1000 Z" fill="#555"/>
<path d="M1767 993 H1777 L1772 1002.500 H1761" fill="none" stroke="#777" stroke-width="1.200"/>
<path d="M1757 1002 H1772 L1778 999 " fill="none" stroke="#666" stroke-width="1.200"/>
<path d="M1756 1005.500 H1772" stroke="#999" stroke-width="2"/>
<!-- trash -->
<path d="M1807.500 994 H1820.500 L1819.700 1006 Q1819.700 1007.500 1817.700 1007.500 H1810.300 Q1808.300 1007.500 1808.300 1006 Z" fill="#ececec" stroke="#444" stroke-width="1.600" stroke-linejoin="round"/>
<path d="M1806.500 992.800 H1821.500 M1811 990.300 Q1814 988.300 1817 990.300" stroke="#444" stroke-width="1.900" fill="none" stroke-linecap="round"/>
</svg>
<div class="sep" style="left:1705px;top:985px;height:27px;background:#d2d2d2"></div>
<div class="sep" style="left:1790px;top:985px;height:27px;background:#d2d2d2"></div>
<div class="a" style="left:0;top:0;width:5px;height:1023px;background:linear-gradient(90deg,#3a3a3e 0,#4a4a4e 2px,rgba(110,110,116,.7) 3px,rgba(160,160,166,0) 4.300px)"></div>
<div class="a" style="left:0;top:1020.300px;width:1919px;height:3px;background:linear-gradient(180deg,#c8ccd8 0,#9aa0b2 18%,#7a8298 45%,#5e667c 100%)"></div>
<div class="a" style="left:1916px;top:22px;width:3px;height:1001px;background:linear-gradient(90deg,#d4d4da,#7a7a80 60%,#5a5a60)"></div><!--RIGHTEDGE-->
</body>
</html>
